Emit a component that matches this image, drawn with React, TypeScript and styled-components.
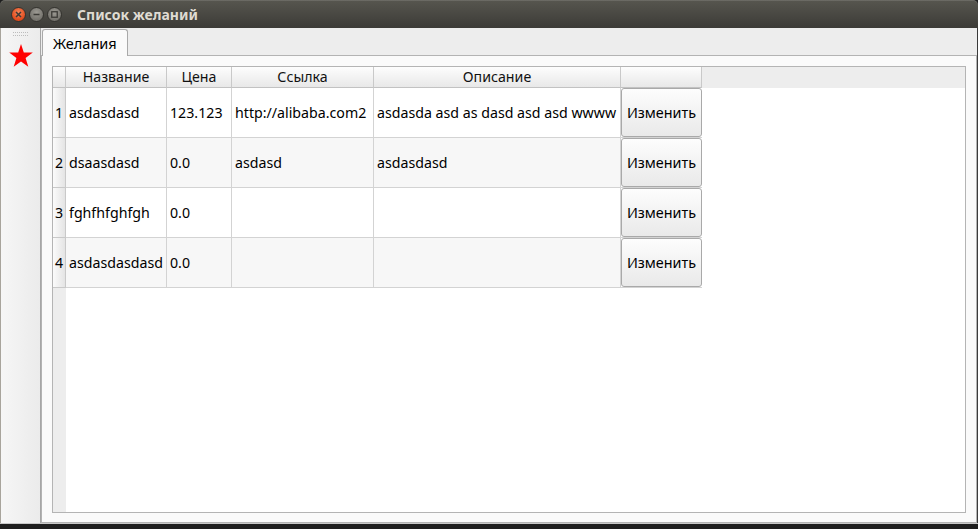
import React from 'react';
import styled, { createGlobalStyle } from 'styled-components';

const Global = createGlobalStyle`
  html, body { margin: 0; padding: 0; background: #1e1e1e; }
  body { font-family: "Noto Sans", "DejaVu Sans", sans-serif; }
  * { box-sizing: border-box; }
`;

const Window = styled.div`
  width: 978px;
  height: 529px;
  display: flex;
  flex-direction: column;
  overflow: hidden;
  background: #1e1e1e;
`;

const TitleBar = styled.div`
  height: 28px;
  flex: none;
  display: flex;
  align-items: center;
  padding-left: 11px;
  background: linear-gradient(#57564f, #3c3b37);
  border-radius: 5px 5px 0 0;
  box-shadow: inset 0 1px 0 rgba(255, 255, 255, 0.12);
`;

const WinButtons = styled.div`
  display: flex;
  gap: 3px;
`;

const WinButton = styled.div<{ $close?: boolean }>`
  width: 15px;
  height: 15px;
  border-radius: 50%;
  display: flex;
  align-items: center;
  justify-content: center;
  border: 1px solid #34332f;
  background: ${(p) =>
    p.$close
      ? 'radial-gradient(circle at 50% 35%, #f7865a, #df4a1c 70%)'
      : 'radial-gradient(circle at 50% 35%, #9c9a93, #75736d 70%)'};
`;

const Title = styled.div`
  margin-left: 15px;
  font-family: "Noto Sans", "DejaVu Sans", sans-serif;
  font-weight: bold;
  font-size: 14px;
  color: #dfdbd2;
`;

const Body = styled.div`
  flex: 1;
  display: flex;
  background: #ededed;
  min-height: 0;
`;

const Toolbar = styled.div`
  width: 41px;
  flex: none;
  display: flex;
  flex-direction: column;
  align-items: center;
  border-left: 1px solid #a8a49c;
  border-right: 1px solid #a6a6a6;
  background: linear-gradient(90deg, #f6f6f6, #ebebeb);
  padding-top: 4px;
`;

const Grip = styled.svg`
  display: block;
`;

const StarIcon = styled.svg`
  margin-top: 8px;
  margin-left: 1px;
`;

const Main = styled.div`
  flex: 1;
  display: flex;
  flex-direction: column;
  border-right: 1px solid #3a3a3a;
  min-width: 0;
`;

const TabBar = styled.div`
  height: 27px;
  flex: none;
  display: flex;
  align-items: flex-end;
  padding-left: 1px;
`;

const Tab = styled.div`
  position: relative;
  z-index: 1;
  height: 27px;
  margin-bottom: -1px;
  padding: 0 10px 0 10px;
  display: flex;
  align-items: center;
  border: 1px solid #a9a9a9;
  border-bottom: none;
  border-radius: 3px 3px 0 0;
  background: #fafafa;
  font-size: 14.5px;
  color: #000;
`;

const Pane = styled.div`
  flex: 1;
  display: flex;
  border: 1px solid #b3b3b3;
  background: #fafafa;
  padding: 10px 10px 9px 10px;
  min-height: 0;
`;

const Table = styled.div`
  flex: 1;
  display: flex;
  flex-direction: column;
  border: 1px solid #b4b4b4;
  background: #fff;
  overflow: hidden;
  font-size: 14.2px;
  color: #000;
`;

const HeaderRow = styled.div`
  height: 21px;
  flex: none;
  display: flex;
  background: #ededed;
`;

const HeadCell = styled.div<{ $w: number }>`
  width: ${(p) => p.$w}px;
  flex: none;
  height: 21px;
  border-right: 1px solid #c9c9c9;
  border-bottom: 1px solid #c2c2c2;
  background: linear-gradient(#fdfdfd, #e8e8e8);
  text-align: center;
  line-height: 20px;
  white-space: nowrap;
  overflow: hidden;
  color: #111;
`;

const BodyArea = styled.div`
  flex: 1;
  display: flex;
  min-height: 0;
`;

const RowHeaders = styled.div`
  width: 13px;
  flex: none;
  background: #ededed;
`;

const RowNum = styled.div`
  height: 50px;
  display: flex;
  align-items: center;
  justify-content: center;
  border-right: 1px solid #c9c9c9;
  border-bottom: 1px solid #c9c9c9;
  background: linear-gradient(90deg, #fbfbfb, #e4e4e4);
`;

const Rows = styled.div`
  flex: 1;
  display: flex;
  flex-direction: column;
`;

const Row = styled.div`
  height: 50px;
  flex: none;
  display: flex;
`;

const Cell = styled.div<{ $w: number; $alt: boolean }>`
  width: ${(p) => p.$w}px;
  flex: none;
  display: flex;
  align-items: center;
  padding-left: 3px;
  border-right: 1px solid #d3d3d3;
  border-bottom: 1px solid #d3d3d3;
  background: ${(p) => (p.$alt ? '#f7f7f7' : '#ffffff')};
  white-space: nowrap;
  overflow: hidden;
`;

const ButtonCell = styled.div<{ $w: number }>`
  width: ${(p) => p.$w}px;
  flex: none;
  height: 50px;
  border-bottom: 1px solid #d3d3d3;
`;

const EditButton = styled.button`
  width: 100%;
  height: 100%;
  margin: 0;
  padding: 0;
  border: 1px solid #a9a9a9;
  border-radius: 3px;
  background: linear-gradient(#fdfdfd, #e9e9e9);
  font-family: inherit;
  font-size: 14.4px;
  color: #000;
  white-space: nowrap;
`;

const BottomEdge = styled.div`
  height: 6px;
  flex: none;
  background: #1e1e1e;
  border-top: 1px solid #c8c8c8;
`;

const widths = [101, 65, 142, 247];
const headers = ['Название', 'Цена', 'Ссылка', 'Описание'];
const data = [
  ['asdasdasd', '123.123', 'http://alibaba.com2', 'asdasda asd as dasd asd asd wwww'],
  ['dsaasdasd', '0.0', 'asdasd', 'asdasdasd'],
  ['fghfhfghfgh', '0.0', '', ''],
  ['asdasdasdasd', '0.0', '', ''],
];

const gripDots: Array<[number, number]> = [];
for (let r = 0; r < 2; r++) {
  for (let c = 0; c < 8; c++) gripDots.push([c * 2, r * 3]);
}

export default function App() {
  return (
    <>
      <Global />
      <Window>
        <TitleBar>
          <WinButtons>
            <WinButton $close>
              <svg width="7" height="7" viewBox="0 0 7 7">
                <path d="M1 1L6 6M6 1L1 6" stroke="#3c3b37" strokeWidth="1.5" />
              </svg>
            </WinButton>
            <WinButton>
              <svg width="7" height="7" viewBox="0 0 7 7">
                <path d="M0.5 3.5H6.5" stroke="#3c3b37" strokeWidth="1.5" />
              </svg>
            </WinButton>
            <WinButton>
              <svg width="7" height="7" viewBox="0 0 7 7">
                <rect x="0.75" y="0.75" width="5.5" height="5.5" fill="none" stroke="#3c3b37" strokeWidth="1.3" />
              </svg>
            </WinButton>
          </WinButtons>
          <Title>Список желаний</Title>
        </TitleBar>
        <Body>
          <Toolbar>
            <Grip width="16" height="4" viewBox="0 0 16 4">
              {gripDots.map(([x, y], i) => (
                <rect key={i} x={x} y={y} width="1" height="1" fill="#bcbcbc" />
              ))}
            </Grip>
            <StarIcon width="24" height="23" viewBox="0 0 24 23">
              <polygon
                points="12,0 14.8,8.5 23.8,8.6 16.6,14 19.3,22.7 12,17.5 4.7,22.7 7.4,14 0.2,8.6 9.2,8.5"
                fill="#ff0000"
              />
            </StarIcon>
          </Toolbar>
          <Main>
            <TabBar>
              <Tab>Желания</Tab>
            </TabBar>
            <Pane>
              <Table>
                <HeaderRow>
                  <HeadCell $w={13} />
                  {headers.map((h, i) => (
                    <HeadCell key={h} $w={widths[i]}>
                      {h}
                    </HeadCell>
                  ))}
                  <HeadCell $w={81} />
                </HeaderRow>
                <BodyArea>
                  <RowHeaders>
                    {data.map((_, i) => (
                      <RowNum key={i}>{i + 1}</RowNum>
                    ))}
                  </RowHeaders>
                  <Rows>
                    {data.map((r, i) => (
                      <Row key={i}>
                        {r.map((c, j) => (
                          <Cell key={j} $w={widths[j]} $alt={i % 2 === 1}>
                            {c}
                          </Cell>
                        ))}
                        <ButtonCell $w={81}>
                          <EditButton>Изменить</EditButton>
                        </ButtonCell>
                      </Row>
                    ))}
                  </Rows>
                </BodyArea>
              </Table>
            </Pane>
          </Main>
        </Body>
        <BottomEdge />
      </Window>
    </>
  );
}
